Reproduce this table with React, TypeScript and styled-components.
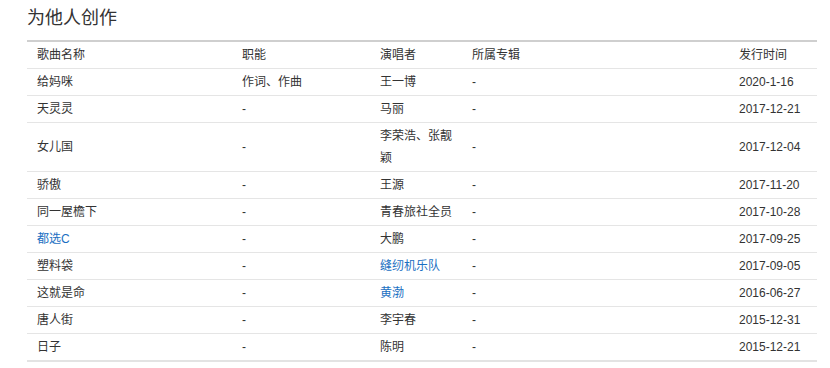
import React from 'react';
import styled, { createGlobalStyle } from 'styled-components';

interface Song {
    name: string;
    role: string;
    singer: string;
    album: string;
    date: string;
    nameLink?: boolean;
    singerLink?: boolean;
}

const songs: Song[] = [
    { name: '给妈咪', role: '作词、作曲', singer: '王一博', album: '-', date: '2020-1-16' },
    { name: '天灵灵', role: '-', singer: '马丽', album: '-', date: '2017-12-21' },
    { name: '女儿国', role: '-', singer: '李荣浩、张靓颖', album: '-', date: '2017-12-04' },
    { name: '骄傲', role: '-', singer: '王源', album: '-', date: '2017-11-20' },
    { name: '同一屋檐下', role: '-', singer: '青春旅社全员', album: '-', date: '2017-10-28' },
    { name: '都选C', role: '-', singer: '大鹏', album: '-', date: '2017-09-25', nameLink: true },
    { name: '塑料袋', role: '-', singer: '缝纫机乐队', album: '-', date: '2017-09-05', singerLink: true },
    { name: '这就是命', role: '-', singer: '黄渤', album: '-', date: '2016-06-27', singerLink: true },
    { name: '唐人街', role: '-', singer: '李宇春', album: '-', date: '2015-12-31' },
    { name: '日子', role: '-', singer: '陈明', album: '-', date: '2015-12-21' },
];

const GlobalStyle = createGlobalStyle`
  body {
    margin: 0;
    background: #fff;
    font-family: "Liberation Sans", Arial, "Noto Sans CJK SC", sans-serif;
  }
`;

const Section = styled.section`
  width: 790px;
  padding-left: 27px;
`;

const Title = styled.h2`
  margin: 0;
  padding-bottom: 4px;
  font-size: 18px;
  font-weight: normal;
  line-height: 36px;
  color: #333;
`;

const Table = styled.table`
  width: 790px;
  table-layout: fixed;
  border-collapse: collapse;
  border-top: 2px solid #cfcfcf;
  border-bottom: 2px solid #e3e3e3;
  font-size: 12px;
  color: #333;
`;

const Col = styled.col<{ $width: number }>`
  width: ${p => p.$width}px;
`;

const Cell = styled.td`
  padding: 2px 10px;
  line-height: 22px;
  text-align: left;
  vertical-align: middle;
  font-weight: normal;
  border-bottom: 1px solid #e5e5e5;
  word-break: break-all;
`;

const HeadCell = styled(Cell).attrs({ as: 'th' })``;

const Link = styled.a`
  color: #1a6fc2;
  text-decoration: none;
  cursor: pointer;
`;

const widths = [205, 138, 92, 267, 88];

const App: React.FC = () => {
    return (
        <>
            <GlobalStyle />
            <Section>
                <Title>为他人创作</Title>
                <Table>
                    <colgroup>
                        {widths.map((w, i) => <Col key={i} $width={w} />)}
                    </colgroup>
                    <thead>
                        <tr>
                            <HeadCell>歌曲名称</HeadCell>
                            <HeadCell>职能</HeadCell>
                            <HeadCell>演唱者</HeadCell>
                            <HeadCell>所属专辑</HeadCell>
                            <HeadCell>发行时间</HeadCell>
                        </tr>
                    </thead>
                    <tbody>
                        {songs.map(song => (
                            <tr key={song.name}>
                                <Cell>{song.nameLink ? <Link>{song.name}</Link> : song.name}</Cell>
                                <Cell>{song.role}</Cell>
                                <Cell>{song.singerLink ? <Link>{song.singer}</Link> : song.singer}</Cell>
                                <Cell>{song.album}</Cell>
                                <Cell>{song.date}</Cell>
                            </tr>
                        ))}
                    </tbody>
                </Table>
            </Section>
        </>
    );
}

export default App;
